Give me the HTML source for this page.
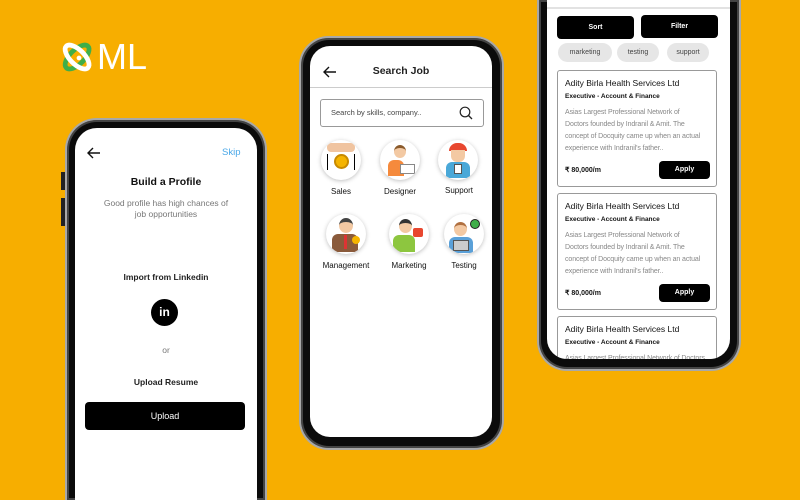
<!DOCTYPE html>
<html><head><meta charset="utf-8"><style>
*{margin:0;padding:0;box-sizing:border-box}
html,body{width:800px;height:500px;overflow:hidden}
body{background:#F7AE00;font-family:"Liberation Sans",sans-serif;position:relative}
#w{position:absolute;left:0;top:0;width:800px;height:500px;overflow:hidden}
.a{position:absolute}
.ph{position:absolute;background:#0b0b0b;border:2px solid #a8a8a8;box-shadow:inset 0 0 0 2px #444}
.sc{position:absolute;background:#fff;overflow:hidden}
.c{text-align:center}
.btn{position:absolute;background:#000;color:#fff;border-radius:4px;text-align:center;font-weight:bold}
.ic{position:absolute;width:40px;height:40px;border-radius:50%;background:#fff;box-shadow:0 1px 4px rgba(0,0,0,.25);overflow:hidden}
.lb{position:absolute;font-size:8px;color:#111;text-align:center;width:70px}
.card{position:absolute;left:10px;width:160px;border:1px solid #999;border-radius:3px;background:#fff;overflow:hidden}
.card .t{position:absolute;left:7px;top:7px;font-size:8.5px;color:#111}
.card .s{position:absolute;left:7px;top:22px;font-size:6.5px;font-weight:bold;color:#111}
.card .d{position:absolute;left:7px;top:36px;font-size:7px;line-height:12px;color:#888;width:136px;letter-spacing:-0.1px}
.card .p{position:absolute;left:7px;top:95px;font-size:7px;color:#111;font-weight:bold}
.card .ap{position:absolute;left:101px;top:90px;width:51px;height:18px;background:#000;color:#fff;border-radius:4px;font-size:7px;font-weight:bold;text-align:center;line-height:18px}
.chip{position:absolute;height:19px;border-radius:10px;background:#e6e6e6;font-size:7px;color:#444;text-align:center;line-height:19px}
</style></head><body><div id="w">

<svg class="a" style="left:58px;top:37px" width="42" height="42" viewBox="0 0 44 44">
<ellipse cx="20" cy="21" rx="16" ry="7.5" transform="rotate(-45 20 21)" fill="none" stroke="#3fae49" stroke-width="5"/>
<ellipse cx="20" cy="21" rx="16" ry="7.5" transform="rotate(45 20 21)" fill="none" stroke="#fff" stroke-width="5"/>
<circle cx="22" cy="22" r="2.5" fill="#fff"/>
</svg>
<div class="a" style="left:97px;top:38px;font-size:36px;color:#fff;line-height:38px">ML</div>

<div class="a" style="left:61px;top:172px;width:4px;height:18px;background:#222"></div>
<div class="a" style="left:61px;top:198px;width:4px;height:28px;background:#222"></div>
<div class="ph" style="left:65px;top:118px;width:202px;height:382px;border-radius:32px 32px 0 0;border-bottom:0"></div>
<div class="sc" style="left:75px;top:128px;width:182px;height:372px;border-radius:22px 22px 0 0">
  <svg class="a" style="left:12px;top:19px" width="14" height="12" viewBox="0 0 14 12"><path d="M13 6H1M6 1L1 6l5 5" fill="none" stroke="#111" stroke-width="1.4"/></svg>
  <div class="a" style="left:147px;top:19px;font-size:9.5px;color:#4aa8e8">Skip</div>
  <div class="a c" style="left:0;width:182px;top:48px;font-size:10.5px;font-weight:bold;color:#111">Build a Profile</div>
  <div class="a c" style="left:0;width:182px;top:70px;font-size:8.5px;color:#777;line-height:11px">Good profile has high chances of<br>job opportunities</div>
  <div class="a c" style="left:0;width:182px;top:144px;font-size:8.5px;font-weight:bold;color:#222">Import from Linkedin</div>
  <div class="a c" style="left:76px;top:171px;width:27px;height:27px;border-radius:50%;background:#000;color:#fff;font-weight:bold;font-size:12px;line-height:27px">in</div>
  <div class="a c" style="left:0;width:182px;top:217px;font-size:8.5px;color:#777">or</div>
  <div class="a c" style="left:0;width:182px;top:249px;font-size:8.5px;font-weight:bold;color:#222">Upload Resume</div>
  <div class="btn" style="left:10px;top:274px;width:160px;height:28px;line-height:28px;font-size:9px;font-weight:normal">Upload</div>
</div>

<div class="ph" style="left:299px;top:36px;width:205px;height:414px;border-radius:30px"></div>
<div class="sc" style="left:310px;top:46px;width:182px;height:391px;border-radius:20px">
  <svg class="a" style="left:13px;top:20px" width="14" height="12" viewBox="0 0 14 12"><path d="M13 6H1M6 1L1 6l5 5" fill="none" stroke="#111" stroke-width="1.4"/></svg>
  <div class="a c" style="left:0;width:182px;top:19px;font-size:10.5px;font-weight:bold;color:#222">Search Job</div>
  <div class="a" style="left:0;top:41px;width:182px;height:1px;background:#ccc"></div>
  <div class="a" style="left:10px;top:53px;width:164px;height:28px;border:1px solid #999;border-radius:3px"></div>
  <div class="a" style="left:21px;top:62px;font-size:7.5px;color:#444">Search by skills, company..</div>
  <svg class="a" style="left:149px;top:60px" width="14" height="14" viewBox="0 0 14 14"><circle cx="6" cy="6" r="4.8" fill="none" stroke="#222" stroke-width="1.2"/><path d="M9.5 9.5L13 13" stroke="#222" stroke-width="1.3"/></svg>

  <div class="ic" style="left:11px;top:94px"><div class="a" style="left:6px;top:3px;width:28px;height:9px;background:#f0c4a0;border-radius:4px"></div><div class="a" style="left:13px;top:14px;width:15px;height:15px;border-radius:50%;background:#f5b400;border:2px solid #c88a00"></div><div class="a" style="left:6px;top:14px;width:1px;height:16px;background:#000"></div><div class="a" style="left:33px;top:14px;width:1px;height:16px;background:#000"></div></div>
  <div class="lb" style="left:-4px;top:141px">Sales</div>
  <div class="ic" style="left:70px;top:94px"><div class="a" style="left:14px;top:5px;width:12px;height:13px;border-radius:50%;background:#f3c9a3;border-top:3px solid #8a5a2b"></div><div class="a" style="left:8px;top:20px;width:16px;height:16px;border-radius:6px 6px 0 0;background:#f58a3c"></div><div class="a" style="left:20px;top:24px;width:15px;height:10px;background:#fff;border:1px solid #888"></div></div>
  <div class="lb" style="left:55px;top:141px">Designer</div>
  <div class="ic" style="left:128px;top:94px"><div class="a" style="left:11px;top:3px;width:18px;height:8px;border-radius:9px 9px 0 0;background:#e8472f"></div><div class="a" style="left:13px;top:10px;width:14px;height:12px;background:#f3c9a3;border-radius:0 0 6px 6px"></div><div class="a" style="left:8px;top:22px;width:24px;height:16px;border-radius:6px 6px 0 0;background:#4aa8d8"></div><div class="a" style="left:16px;top:24px;width:8px;height:10px;background:#fff;border:1px solid #555"></div></div>
  <div class="lb" style="left:114px;top:140px">Support</div>

  <div class="ic" style="left:16px;top:168px"><div class="a" style="left:13px;top:4px;width:14px;height:15px;border-radius:50%;background:#f3c9a3;border-top:4px solid #444"></div><div class="a" style="left:6px;top:20px;width:26px;height:18px;border-radius:6px 6px 0 0;background:#8a5a3b"></div><div class="a" style="left:18px;top:21px;width:3px;height:14px;background:#d33"></div><div class="a" style="left:26px;top:22px;width:8px;height:8px;border-radius:50%;background:#f5b400"></div></div>
  <div class="lb" style="left:1px;top:215px">Management</div>
  <div class="ic" style="left:79px;top:168px"><div class="a" style="left:10px;top:5px;width:13px;height:14px;border-radius:50%;background:#f3c9a3;border-top:4px solid #333"></div><div class="a" style="left:4px;top:21px;width:22px;height:17px;border-radius:6px 6px 0 0;background:#8dc63f"></div><div class="a" style="left:24px;top:14px;width:10px;height:9px;background:#e8472f;border-radius:2px"></div></div>
  <div class="lb" style="left:64px;top:215px">Marketing</div>
  <div class="ic" style="left:134px;top:168px"><div class="a" style="left:10px;top:8px;width:13px;height:14px;border-radius:50%;background:#f3c9a3;border-top:3px solid #b07040"></div><div class="a" style="left:5px;top:23px;width:24px;height:16px;border-radius:6px 6px 0 0;background:#5aa0d8"></div><div class="a" style="left:9px;top:26px;width:16px;height:11px;background:#ccc;border:1px solid #555"></div><div class="a" style="left:26px;top:5px;width:10px;height:10px;border-radius:50%;background:#3fae49;border:1px solid #222"></div></div>
  <div class="lb" style="left:119px;top:215px">Testing</div>
</div>

<div class="ph" style="left:537px;top:0;width:204px;height:371px;border-radius:0 0 30px 30px;border-top:0"></div>
<div class="sc" style="left:547px;top:0;width:183px;height:359px;border-radius:0 0 20px 20px">
  <div class="a" style="left:0;top:7px;width:183px;height:2px;background:#e2e2e2"></div>
  <div class="btn" style="left:10px;top:16px;width:77px;height:23px;line-height:23px;font-size:7px">Sort</div>
  <div class="btn" style="left:94px;top:15px;width:77px;height:23px;line-height:23px;font-size:7px">Filter</div>
  <div class="chip" style="left:11px;top:43px;width:54px">marketing</div>
  <div class="chip" style="left:70px;top:43px;width:42px">testing</div>
  <div class="chip" style="left:120px;top:43px;width:42px">support</div>

  <div class="card" style="top:70px;height:117px"><div class="t">Adity Birla Health Services Ltd</div><div class="s">Executive - Account &amp; Finance</div><div class="d">Asias Largest Professional Network of Doctors founded by Indranil &amp; Amit. The concept of Docquity came up when an actual experience with Indranil's father..</div><div class="p">₹ 80,000/m</div><div class="ap">Apply</div></div>
  <div class="card" style="top:193px;height:117px"><div class="t">Adity Birla Health Services Ltd</div><div class="s">Executive - Account &amp; Finance</div><div class="d">Asias Largest Professional Network of Doctors founded by Indranil &amp; Amit. The concept of Docquity came up when an actual experience with Indranil's father..</div><div class="p">₹ 80,000/m</div><div class="ap">Apply</div></div>
  <div class="card" style="top:316px;height:50px"><div class="t">Adity Birla Health Services Ltd</div><div class="s">Executive - Account &amp; Finance</div><div class="d" style="width:170px">Asias Largest Professional Network of Doctors</div></div>
</div>
</div></body></html>
